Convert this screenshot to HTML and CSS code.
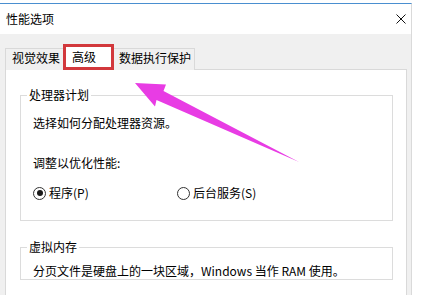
FILE: index.html
```html
<!DOCTYPE html>
<html lang="zh-CN">
<head>
<meta charset="utf-8">
<title>性能选项</title>
<link rel="stylesheet" href="styles.css">
</head>
<body>
<div class="window">
  <div class="titlebar">
    <span class="title">性能选项</span>
    <svg class="close" width="10" height="10" viewBox="0 0 10 10"><path d="M0.5 0.5 L9.5 9.5 M9.5 0.5 L0.5 9.5" stroke="#111" stroke-width="1" fill="none"/></svg>
  </div>
  <div class="tabs">
    <div class="tab tab-visual">视觉效果</div>
    <div class="tab tab-active">高级</div>
    <div class="tab tab-dep">数据执行保护</div>
  </div>
  <div class="panel">
    <fieldset class="group group-cpu">
      <legend>处理器计划</legend>
      <p class="line l1">选择如何分配处理器资源。</p>
      <p class="line l2">调整以优化性能:</p>
      <div class="radios">
        <label class="opt opt-first"><span class="radio checked"></span>程序(P)</label>
        <label class="opt"><span class="radio"></span>后台服务(S)</label>
      </div>
    </fieldset>
    <fieldset class="group group-vm">
      <legend>虚拟内存</legend>
      <p class="line l3">分页文件是硬盘上的一块区域，Windows 当作 RAM 使用。</p>
    </fieldset>
  </div>
</div>
<svg class="arrow" width="422" height="295" viewBox="0 0 422 295">
  <polygon points="135,83 166,84.5 163.5,91 299,162 156.5,100 155,106.5" fill="#e83ce4"/>
</svg>
</body>
</html>
```

FILE: styles.css
```css
* { box-sizing: border-box; }
html, body {
  margin: 0;
  padding: 0;
}
body {
  width: 422px;
  height: 295px;
  overflow: hidden;
  background: #fff;
  position: relative;
  font-family: "Noto Sans CJK SC", "Noto Sans", sans-serif;
  font-size: 12px;
  color: #000;
}
.window {
  margin-top: 3px;
  width: 412px;
  height: 292px;
  border-top: 1px solid #4a8fd0;
  border-right: 1px solid #dadada;
  background: #f0f0f0;
  overflow: hidden;
}
.titlebar {
  height: 30px;
  background: #fff;
  display: flex;
  align-items: center;
  justify-content: space-between;
  padding: 0 5px 0 6px;
}
.title {
  line-height: 14px;
}
.close {
  display: block;
}
.tabs {
  display: flex;
  align-items: flex-end;
  margin-top: 10px;
  padding-left: 5px;
  height: 26px;
  margin-bottom: -1px;
  position: relative;
  z-index: 1;
}
.tab {
  height: 22px;
  line-height: 18px;
  border: 1px solid #d9d9d9;
  border-bottom: none;
  background: #f0f0f0;
  white-space: nowrap;
}
.tab-visual {
  width: 58px;
  padding-left: 6px;
  border-right: none;
}
.tab-active {
  width: 51px;
  height: 26px;
  line-height: 19px;
  padding-left: 6px;
  background: #fff;
  border: 3px solid #d2383c;
}
.tab-dep {
  width: 81px;
  padding-left: 5px;
  border-left: none;
}
.panel {
  margin-left: 5px;
  width: 402px;
  height: 230px;
  background: #fff;
  border: 1px solid #d9d9d9;
  padding-top: 18px;
}
.group {
  margin: 0 13px 0 14px;
  padding: 0 0 0 12px;
  border: 1px solid #dcdcdc;
  min-width: 0;
}
.group legend {
  margin-left: -6px;
  padding: 0 2px;
  line-height: 14px;
}
.line {
  margin: 0;
  line-height: 16px;
  white-space: nowrap;
}
.l1 { margin-top: 13px; }
.l2 { margin-top: 24px; }
.radios {
  display: flex;
  margin-top: 14px;
  margin-bottom: 19px;
  line-height: 16px;
}
.opt {
  display: flex;
  align-items: center;
  gap: 3px;
}
.opt-first {
  width: 144px;
}
.radio {
  width: 13px;
  height: 13px;
  border: 1px solid #333;
  border-radius: 50%;
  position: relative;
  background: #fff;
}
.radio.checked::after {
  content: "";
  position: absolute;
  left: 2.5px;
  top: 2.5px;
  width: 6px;
  height: 6px;
  border-radius: 50%;
  background: #1a1a1a;
}
.group-vm {
  margin-top: 19px;
}
.l3 { margin-top: 9px; }
.arrow {
  position: absolute;
  left: 0;
  top: 0;
  pointer-events: none;
}
```
